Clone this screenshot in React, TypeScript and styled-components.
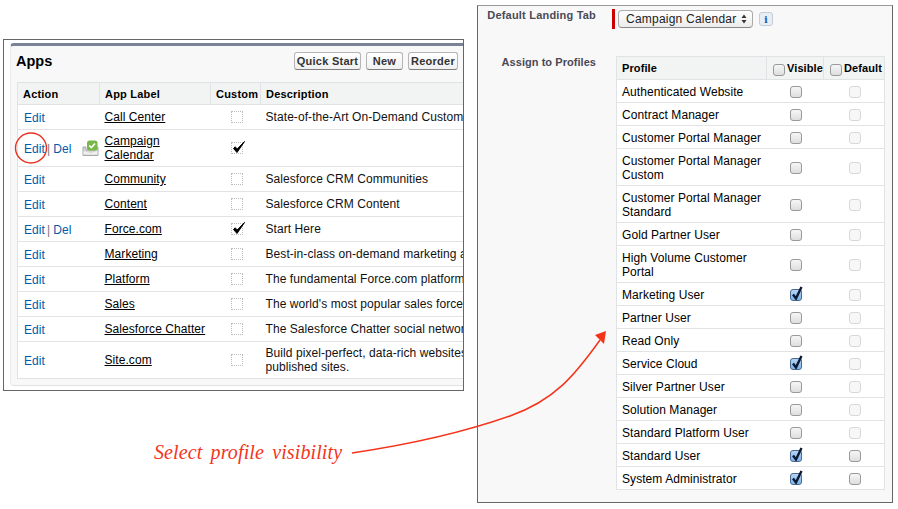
import React from "react";
import styled, { createGlobalStyle } from "styled-components";

const Global = createGlobalStyle`
  html, body { margin: 0; padding: 0; background: #fff; }
  body { width: 898px; height: 509px; overflow: hidden; font-family: "Liberation Sans", Arial, sans-serif; font-size: 12px; color: #000; }
  * { box-sizing: border-box; }
`;

const Page = styled.div`
  position: relative;
  width: 898px;
  height: 509px;
  display: flex;
  align-items: flex-start;
  padding-left: 3px;
`;

/* Left window */
const AppsWindow = styled.section`
  position: relative;
  width: 461px;
  height: 352px;
  margin-top: 39px;
  border: 1px solid #666;
  background: #fff;
  overflow: hidden;
  padding: 3px 0 5px 6px;
`;
const AppsPanel = styled.div`
  width: 600px;
  height: 343px;
  background: #f8f8f8;
  border-top: 3px solid #7b8297;
  border-left: 1px solid #ececec;
  border-bottom: 1px solid #e2e2e2;
  border-radius: 4px 0 0 4px;
  padding: 0 0 0 6px;
`;
const PanelHead = styled.div`
  width: 442px;
  height: 36px;
  margin-left: -1px;
  display: flex;
  align-items: center;
  justify-content: space-between;
  padding-bottom: 6px;
`;
const Title = styled.h2`
  margin: 0;
  font-size: 14.5px;
  font-weight: bold;
  color: #000;
`;
const Buttons = styled.div`
  display: flex;
  gap: 5px;
`;
const Btn = styled.button<{ $w: number }>`
  width: ${(p) => p.$w}px;
  height: 18px;
  padding: 0;
  border: 1px solid #b5b5b5;
  border-bottom-color: #7f7f7f;
  border-radius: 3px;
  background: linear-gradient(#fff, #f0f0f0);
  font: bold 11px "Liberation Sans", Arial, sans-serif;
  letter-spacing: 0.25px;
  color: #333;
`;
const AppsTable = styled.table`
  width: 580px;
  table-layout: fixed;
  border-collapse: collapse;
  background: #fff;
  border: 1px solid #e0e3e5;
  letter-spacing: 0.07px;
  & th {
    height: 22px;
    padding: 0 0 0 5px;
    text-align: left;
    font-size: 11px;
    letter-spacing: 0.2px;
    background: #f2f3f3;
    border-bottom: 1px solid #e0e3e5;
    border-right: 1px solid #e0e3e5;
    white-space: nowrap;
  }
  & td {
    padding: 0 0 0 5px;
    border-bottom: 1px solid #e3e3e3;
    line-height: 14px;
  }
`;
const AppRow = styled.tr<{ $h: number }>`
  height: ${(p) => p.$h}px;
`;
const ActionWrap = styled.div`
  display: flex;
  align-items: center;
  padding: 2px 0 0 1px;
  color: #015ba7;
`;
const ActionLink = styled.a`
  color: #015ba7;
`;
const Sep = styled.span`
  color: #777;
  margin: 0 3px 0 2px;
`;
const MailIcon = styled.svg`
  position: absolute;
  left: 78px;
  top: 100px;
`;
const AppLabel = styled.a`
  color: #000;
  text-decoration: underline;
`;
const CustomCell = styled.td`
  text-align: center;
`;
const DottedBox = styled.span`
  display: block;
  position: relative;
  width: 12px;
  height: 12px;
  margin: 0 0 0 15px;
  border: 1px dotted #bbb;
`;
const Tick = styled.svg`
  position: absolute;
  left: 0;
  top: -3px;
`;
const DescCell = styled.td`
  white-space: nowrap;
  color: #111;
`;

/* Right window */
const ProfilesWindow = styled.section`
  width: 416px;
  height: 498px;
  margin: 5px 0 0 13px;
  border: 1px solid #666;
  border-top-color: #999;
  background: #f8f8f8;
`;
const FormRow = styled.div<{ $h: number }>`
  display: grid;
  grid-template-columns: 119px 1fr;
  column-gap: 15px;
  height: ${(p) => p.$h}px;
`;
const FieldLabel = styled.div<{ $top: number; $ls: number }>`
  text-align: right;
  padding-top: ${(p) => p.$top}px;
  padding-right: 1px;
  font-size: 11px;
  font-weight: bold;
  letter-spacing: ${(p) => p.$ls}px;
  color: #4a4a56;
`;
const FieldValue = styled.div`
  display: flex;
  align-items: flex-start;
  padding-top: 3px;
`;
const Required = styled.span`
  width: 3px;
  height: 20px;
  background: #c00;
`;
const SelectBox = styled.div`
  display: flex;
  align-items: center;
  justify-content: space-between;
  width: 135px;
  height: 18px;
  margin: 1px 0 0 3px;
  padding: 0 5px 0 7px;
  border: 1px solid #aaa;
  border-bottom-color: #888;
  border-radius: 4px;
  background: linear-gradient(#fff, #ececec);
  font-size: 12px;
  letter-spacing: 0.22px;
  color: #222;
`;
const InfoBtn = styled.span`
  width: 14px;
  height: 14px;
  margin: 3px 0 0 6px;
  display: flex;
  align-items: center;
  justify-content: center;
  border: 1px solid #c6ccd4;
  border-radius: 3px;
  background: #e8eef6;
  font: bold 10px "DejaVu Serif", serif;
  color: #1b63b8;
`;
const ProfileTableWrap = styled.div`
  padding: 23px 0 0 4px;
`;
const ProfileTable = styled.table`
  width: 269px;
  table-layout: fixed;
  border-collapse: collapse;
  background: #fff;
  border: 1px solid #e0e3e5;
  letter-spacing: 0.07px;
  & th {
    height: 23px;
    padding: 0;
    background: #f2f3f3;
    border-bottom: 1px solid #e0e3e5;
    border-right: 1px solid #e0e3e5;
    text-align: left;
    font-size: 11px;
    letter-spacing: 0.1px;
    white-space: nowrap;
  }
  & td {
    padding: 5px 0 3px 5px;
    line-height: 14px;
    border-bottom: 1px solid #e3e3e3;
  }
`;
const ProfileHead = styled.th`
  && { padding-left: 5px; }
`;
const HeadCheck = styled.div<{ $gap: number }>`
  display: flex;
  align-items: center;
  gap: ${(p) => p.$gap}px;
  padding-left: 6px;
  & > span { margin-top: 3px; }
`;
const CheckCell = styled.td`
  && { padding: 1px 0 0 2px; }
`;
const Check = styled.span<{ $on?: boolean; $off?: boolean }>`
  position: relative;
  display: block;
  flex: none;
  width: 12px;
  height: 12px;
  margin: ${(p) => (p.$off === undefined ? "0" : "0 auto")};
  border-radius: 3px;
  border: 1px solid ${(p) => (p.$on ? "#4b6a93" : p.$off ? "#d8d8d8" : "#9a9a9a")};
  background: ${(p) =>
    p.$on ? "linear-gradient(#b5d4f4, #7fb4ea)" : p.$off ? "#f7f7f7" : "linear-gradient(#f6f6f6, #dedede)"};
`;
const CheckMark = styled.svg`
  position: absolute;
  left: -1px;
  top: -5px;
`;

/* Annotation */
const Overlay = styled.svg`
  position: absolute;
  left: 0;
  top: 0;
  pointer-events: none;
`;
const Callout = styled.div`
  position: absolute;
  left: 154px;
  top: 441px;
  font: italic 20px "Liberation Serif", serif;
  letter-spacing: 0.12px;
  word-spacing: 3px;
  color: #f5331a;
  white-space: nowrap;
`;

type App = { label: string[]; del?: boolean; mail?: boolean; custom?: boolean; desc?: string[]; h: number };
const apps: App[] = [
  { label: ["Call Center"], desc: ["State-of-the-Art On-Demand Customer Service"], h: 25 },
  { label: ["Campaign", "Calendar"], del: true, mail: true, custom: true, h: 37 },
  { label: ["Community"], desc: ["Salesforce CRM Communities"], h: 25 },
  { label: ["Content"], desc: ["Salesforce CRM Content"], h: 25 },
  { label: ["Force.com"], del: true, custom: true, desc: ["Start Here"], h: 25 },
  { label: ["Marketing"], desc: ["Best-in-class on-demand marketing automation"], h: 25 },
  { label: ["Platform"], desc: ["The fundamental Force.com platform"], h: 25 },
  { label: ["Sales"], desc: ["The world's most popular sales force automation"], h: 25 },
  { label: ["Salesforce Chatter"], desc: ["The Salesforce Chatter social network"], h: 25 },
  { label: ["Site.com"], desc: ["Build pixel-perfect, data-rich websites using", "published sites."], h: 37 },
];

type Profile = { name: string[]; visible?: boolean; def?: boolean };
const profiles: Profile[] = [
  { name: ["Authenticated Website"] },
  { name: ["Contract Manager"] },
  { name: ["Customer Portal Manager"] },
  { name: ["Customer Portal Manager", "Custom"] },
  { name: ["Customer Portal Manager", "Standard"] },
  { name: ["Gold Partner User"] },
  { name: ["High Volume Customer", "Portal"] },
  { name: ["Marketing User"], visible: true },
  { name: ["Partner User"] },
  { name: ["Read Only"] },
  { name: ["Service Cloud"], visible: true },
  { name: ["Silver Partner User"] },
  { name: ["Solution Manager"] },
  { name: ["Standard Platform User"] },
  { name: ["Standard User"], visible: true, def: true },
  { name: ["System Administrator"], visible: true, def: true },
];

const Lines = ({ items }: { items: string[] }) => (
  <>
    {items.map((t, i) => (
      <React.Fragment key={t}>
        {i > 0 && <br />}
        {t}
      </React.Fragment>
    ))}
  </>
);

export default function App() {
  return (
    <Page>
      <Global />
      <AppsWindow>
        <AppsPanel>
          <PanelHead>
            <Title>Apps</Title>
            <Buttons>
              <Btn $w={67}>Quick Start</Btn>
              <Btn $w={37}>New</Btn>
              <Btn $w={50}>Reorder</Btn>
            </Buttons>
          </PanelHead>
          <AppsTable>
            <colgroup>
              <col width={82} />
              <col width={111} />
              <col width={50} />
              <col />
            </colgroup>
            <thead>
              <tr>
                <th>Action</th>
                <th>App Label</th>
                <th>Custom</th>
                <th>Description</th>
              </tr>
            </thead>
            <tbody>
              {apps.map((a) => (
                <AppRow key={a.label.join(" ")} $h={a.h}>
                  <td>
                    <ActionWrap>
                      <ActionLink>Edit</ActionLink>
                      {a.del && (
                        <>
                          <Sep>|</Sep>
                          <ActionLink>Del</ActionLink>
                        </>
                      )}
                    </ActionWrap>
                  </td>
                  <td>
                    <AppLabel>
                      <Lines items={a.label} />
                    </AppLabel>
                  </td>
                  <CustomCell>
                    <DottedBox>
                      {a.custom && (
                        <Tick width="16" height="16" viewBox="0 0 16 16">
                          <path d="M1.5 8.5 L5 12.5 L12.5 1.5 L5.2 9 L3.2 6.8 Z" fill="#000" stroke="#000" strokeWidth="1" strokeLinejoin="round" />
                        </Tick>
                      )}
                    </DottedBox>
                  </CustomCell>
                  <DescCell>
                    <Lines items={a.desc ?? []} />
                  </DescCell>
                </AppRow>
              ))}
            </tbody>
          </AppsTable>
          <MailIcon width="17" height="17" viewBox="0 0 17 17">
            <path d="M1 7 L4 7 L4 10 L13 10 L13 7 L16 7 L16 15.5 L1 15.5 Z" fill="#d5d5d5" stroke="#a9a9a9" />
            <path d="M1.5 14.5 L15.5 14.5 L15.5 11 L8.5 13 L1.5 11 Z" fill="#efefef" />
            <rect x="5" y="0.5" width="10.5" height="10" rx="2.5" fill="#77b84a" />
            <path d="M7.2 5.5 L9.4 7.6 L13 3.5" fill="none" stroke="#fff" strokeWidth="1.6" />
          </MailIcon>
        </AppsPanel>
      </AppsWindow>

      <ProfilesWindow>
        <FormRow $h={27}>
          <FieldLabel $top={3} $ls={0.2}>Default Landing Tab</FieldLabel>
          <FieldValue>
            <Required />
            <SelectBox>
              Campaign Calendar
              <svg width="6" height="10" viewBox="0 0 6 10">
                <path d="M3 0.5 L5.5 4 L0.5 4 Z M3 9.5 L5.5 6 L0.5 6 Z" fill="#333" />
              </svg>
            </SelectBox>
            <InfoBtn>i</InfoBtn>
          </FieldValue>
        </FormRow>
        <FormRow $h={460}>
          <FieldLabel $top={23} $ls={0.05}>Assign to Profiles</FieldLabel>
          <ProfileTableWrap>
            <ProfileTable>
              <colgroup>
                <col width={150} />
                <col width={57} />
                <col />
              </colgroup>
              <thead>
                <tr>
                  <ProfileHead>Profile</ProfileHead>
                  <th>
                    <HeadCheck $gap={2}>
                      <Check />
                      Visible
                    </HeadCheck>
                  </th>
                  <th>
                    <HeadCheck $gap={2}>
                      <Check />
                      Default
                    </HeadCheck>
                  </th>
                </tr>
              </thead>
              <tbody>
                {profiles.map((p) => (
                  <tr key={p.name.join(" ")}>
                    <td>
                      <Lines items={p.name} />
                    </td>
                    <CheckCell>
                      <Check $on={p.visible} $off={false}>
                        {p.visible && (
                          <CheckMark width="14" height="17" viewBox="0 0 14 17">
                            <path d="M3 9.5 L6 13.5 L11.5 2" fill="none" stroke="#0b1a33" strokeWidth="2.4" />
                          </CheckMark>
                        )}
                      </Check>
                    </CheckCell>
                    <CheckCell>
                      <Check $off={!p.def} />
                    </CheckCell>
                  </tr>
                ))}
              </tbody>
            </ProfileTable>
          </ProfileTableWrap>
        </FormRow>
      </ProfilesWindow>

      <Overlay width="898" height="509" viewBox="0 0 898 509">
        <ellipse cx="31" cy="148" rx="15.5" ry="15" fill="none" stroke="#e8331f" strokeWidth="1.4" />
        <path d="M352 453 C 420 443, 470 430, 510 416 C 555 400, 575 375, 600 340" fill="none" stroke="#f5331a" strokeWidth="1.5" />
        <path d="M595 335 L606 331 L604 344 Z" fill="#f5331a" />
      </Overlay>
      <Callout>Select profile visibility</Callout>
    </Page>
  );
}
